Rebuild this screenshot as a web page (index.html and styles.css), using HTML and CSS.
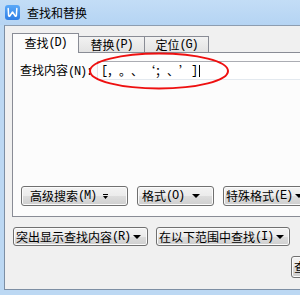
FILE: index.html
```html
<!DOCTYPE html>
<html lang="zh-CN">

<head>
  <meta charset="UTF-8" />
  <title>查找和替换</title>
  <link rel="stylesheet" href="styles.css">
</head>

<body>
  <div class="window">
    <div class="titlebar">
      <svg class="app-icon" width="15" height="15" viewBox="0 0 15 15">
        <defs>
          <linearGradient id="iconBg" x1="0" y1="0" x2="0" y2="1">
            <stop offset="0" stop-color="#5aa8f7" />
            <stop offset="1" stop-color="#2f7fe6" />
          </linearGradient>
        </defs>
        <rect x="0" y="0" width="15" height="15" rx="3" fill="url(#iconBg)" />
        <path d="M3.2 3.5 L3.6 10.5 Q3.8 11.6 4.8 11 L7.5 7 L10.2 11 Q11.2 11.6 11.4 10.5 L11.8 3.5" fill="none" stroke="#fff" stroke-width="1.5" stroke-linejoin="round" stroke-linecap="round" />
      </svg>
      <span class="title">查找和替换</span>
    </div>

    <div class="client">
      <div class="tabs">
        <div class="tab tab-find active">查找<span class="key">(D)</span></div>
        <div class="tab tab-replace">替换<span class="key">(P)</span></div>
        <div class="tab tab-goto">定位<span class="key">(G)</span></div>
      </div>

      <div class="panel">
        <div class="find-row">
          <label class="find-label">查找内容<span class="key">(N):</span></label>
          <div class="find-input"><span class="key">[</span>，。、‘；、’<span class="key">]</span><span class="caret"></span></div>
        </div>

        <div class="panel-buttons">
          <button class="btn btn-adv">高级搜索<span class="key">(M)</span>
            <svg class="more" width="5" height="5" viewBox="0 0 5 5">
              <path d="M0 0.5 H5" stroke="#000" stroke-width="1" />
              <path d="M0 2 H5 L2.5 5 Z" fill="#000" />
            </svg>
          </button>
          <button class="btn btn-fmt">格式<span class="key">(O)</span><span class="drop"></span></button>
          <button class="btn btn-special">特殊格式<span class="key">(E)</span><span class="drop"></span></button>
        </div>
      </div>

      <div class="option-row">
        <button class="btn btn-highlight">突出显示查找内容<span class="key">(R)</span><span class="drop"></span></button>
        <button class="btn btn-range">在以下范围中查找<span class="key">(I)</span><span class="drop"></span></button>
      </div>

      <div class="action-row">
        <button class="btn btn-prev">查找上一个<span class="key">(V)</span></button>
      </div>
    </div>
  </div>

  <!-- 红圈标注 -->
  <svg class="mark" width="143" height="40" viewBox="0 0 143 40">
    <ellipse cx="71" cy="19" rx="69" ry="17.5" fill="none" stroke="#ee1010" stroke-width="2" />
  </svg>
</body>

</html>
```

FILE: styles.css
```css
body {
  margin: 0;
  width: 300px;
  height: 300px;
  overflow: hidden;
  position: relative;
  background: #fff;
  font-family: "Noto Sans CJK SC", "Liberation Sans", sans-serif;
  font-size: 12px;
  color: #000;
  text-spacing-trim: space-all;
}

.window {
  height: 295px;
  display: flex;
  flex-direction: column;
  background: #bcd8f3;
  overflow: hidden;
}

.titlebar {
  height: 25px;
  flex: none;
  display: flex;
  align-items: center;
  padding-left: 5px;
  background: linear-gradient(#c3ddf6, #b5d4f3);
}

.app-icon {
  flex: none;
}

.title {
  margin-left: 7px;
  font-size: 12px;
  line-height: 14px;
}

.client {
  flex: 1;
  margin-left: 4px;
  margin-bottom: 5px;
  border-left: 1px solid #7d8fa4;
  border-top: 1px solid #8d9db0;
  border-bottom: 1px solid #7d8fa4;
  background: #f0f0f0;
  overflow: hidden;
}

.key {
  font-family: "Liberation Mono", monospace;
  letter-spacing: -1.2px;
}

/* 选项卡 */
.tabs {
  display: flex;
  align-items: flex-end;
  height: 19px;
  margin-top: 7px;
  margin-left: 7px;
}

.tab {
  box-sizing: border-box;
  height: 16px;
  border: 1px solid #898c95;
  border-bottom: none;
  border-left: none;
  background: linear-gradient(#f2f2f2, #e3e3e3);
  display: flex;
  align-items: center;
  justify-content: center;
  line-height: 14px;
}

.tab.active {
  position: relative;
  z-index: 1;
  height: 20px;
  margin-bottom: -1px;
  border-left: 1px solid #898c95;
  background: #fcfcfc;
  padding-bottom: 2px;
}

.tab-find {
  width: 67px;
}

.tab-replace {
  width: 66px;
}

.tab-goto {
  width: 64px;
}

.panel {
  box-sizing: border-box;
  width: 320px;
  height: 165px;
  margin-left: 7px;
  border: 1px solid #898c95;
  background: #fcfcfc;
  padding: 8px 0 10px 7px;
  display: flex;
  flex-direction: column;
}

.find-row {
  display: flex;
  align-items: center;
}

.find-label {
  width: 77px;
  flex: none;
  line-height: 14px;
}

.find-input {
  box-sizing: border-box;
  flex: 1;
  height: 19px;
  border: 1px solid #e2e3ea;
  border-top-color: #abadb3;
  border-bottom-color: #e3e9ef;
  background: #fff;
  padding-left: 3px;
  display: flex;
  align-items: center;
  line-height: 14px;
  white-space: pre;
}

.caret {
  display: inline-block;
  width: 1px;
  height: 12px;
  margin-left: 2px;
  background: #000;
}

/* 按钮 */
.btn {
  box-sizing: border-box;
  height: 19px;
  border: 1px solid #707070;
  border-radius: 3px;
  background: linear-gradient(#f3f3f3 0%, #ebebeb 50%, #dddddd 50%, #cfcfcf 100%);
  box-shadow: inset 0 0 0 1px #fbfbfb;
  font-family: inherit;
  font-size: 12px;
  line-height: 14px;
  color: #000;
  padding: 0 0 0 2px;
  display: flex;
  align-items: center;
  justify-content: flex-start;
  white-space: nowrap;
  flex: none;
}

.drop {
  width: 0;
  height: 0;
  border-left: 4px solid transparent;
  border-right: 4px solid transparent;
  border-top: 4px solid #000;
  margin-left: 3px;
}

.panel-buttons {
  margin-top: auto;
  margin-left: 1px;
  display: flex;
  gap: 9px;
}

.panel-buttons .btn {
  height: 20px;
}

.btn-adv {
  width: 107px;
  padding-left: 8px;
}

.btn-adv .more {
  margin-left: 7px;
}

.btn-fmt {
  width: 77px;
  padding-left: 4px;
}

.btn-fmt .drop {
  margin-left: 8px;
}

.btn-special {
  width: 95px;
}

.option-row {
  display: flex;
  gap: 8px;
  margin: 10px 0 0 8px;
}

.btn-highlight {
  width: 135px;
}

.btn-range {
  width: 134px;
}

.action-row {
  margin: 10px 0 0 286px;
}

.btn-prev {
  width: 90px;
  height: 22px;
}

/* 标注 */
.mark {
  position: absolute;
  left: 88px;
  top: 52px;
}
```
